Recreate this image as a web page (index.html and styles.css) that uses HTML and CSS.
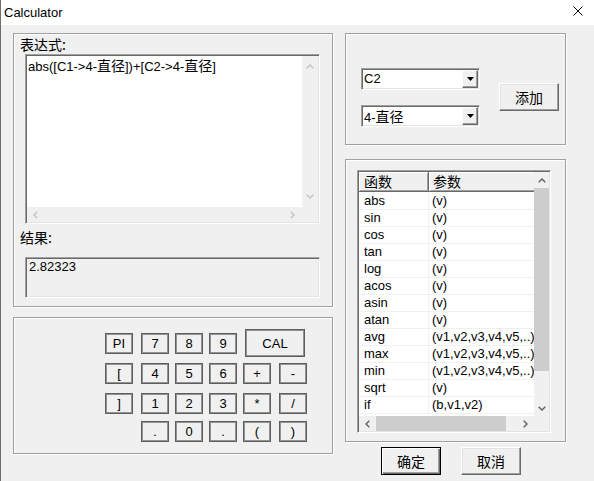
FILE: index.html
```html
<!DOCTYPE html>
<html>
<head>
<meta charset="utf-8">
<title>Calculator</title>
<link rel="stylesheet" href="styles.css">
</head>
<body>
<div class="window">
  <div class="titlebar">
    <span class="title">Calculator</span>
    <svg class="close" viewBox="0 0 10 10"><path d="M0.5 0.5 L9.5 9.5 M9.5 0.5 L0.5 9.5" stroke="#000" stroke-width="1" fill="none"/></svg>
  </div>
  <div class="content">
    <div class="col-left">
      <div class="group g-expr">
        <div class="label">表达式:</div>
        <div class="sunken expr">
          <div class="expr-text">abs([C1-&gt;4-<span class="cjk">直径</span>])+[C2-&gt;4-<span class="cjk">直径</span>]</div>
          <div class="vscroll">
            <svg class="chev-v dis" viewBox="0 0 8 5"><polyline points="0.7,4.3 4,1 7.3,4.3"/></svg>
            <svg class="chev-v dis" viewBox="0 0 8 5"><polyline points="0.7,0.7 4,4 7.3,0.7"/></svg>
          </div>
          <div class="hscroll">
            <svg class="chev-h dis" viewBox="0 0 5 8"><polyline points="4.3,0.7 1,4 4.3,7.3"/></svg>
            <svg class="chev-h dis" viewBox="0 0 5 8"><polyline points="0.7,0.7 4,4 0.7,7.3"/></svg>
          </div>
          <div class="corner"></div>
        </div>
        <div class="label result-label">结果:</div>
        <div class="sunken result">2.82323</div>
      </div>
      <div class="group g-keys">
        <div class="keypad">
          <button class="key">PI</button>
          <button class="key">7</button>
          <button class="key">8</button>
          <button class="key">9</button>
          <button class="key cal">CAL</button>
          <button class="key">[</button>
          <button class="key">4</button>
          <button class="key">5</button>
          <button class="key">6</button>
          <button class="key">+</button>
          <button class="key">-</button>
          <button class="key">]</button>
          <button class="key">1</button>
          <button class="key">2</button>
          <button class="key">3</button>
          <button class="key">*</button>
          <button class="key">/</button>
          <button class="key skip">.</button>
          <button class="key">0</button>
          <button class="key">.</button>
          <button class="key">(</button>
          <button class="key">)</button>
        </div>
      </div>
    </div>
    <div class="col-right">
      <div class="group g-pick">
        <div class="combos">
          <div class="sunken combo">
            <span class="combo-text">C2</span>
            <span class="drop"><svg viewBox="0 0 7 4"><polygon points="0,0 7,0 3.5,4"/></svg></span>
          </div>
          <div class="sunken combo">
            <span class="combo-text">4-<span class="cjk">直径</span></span>
            <span class="drop"><svg viewBox="0 0 7 4"><polygon points="0,0 7,0 3.5,4"/></svg></span>
          </div>
        </div>
        <button class="btn add">添加</button>
      </div>
      <div class="group g-list">
        <div class="sunken list">
          <div class="lv">
            <div class="lv-head">
              <div class="h1">函数</div>
              <div class="h2">参数</div>
            </div>
            <div class="lv-row"><span class="c1">abs</span><span class="c2">(v)</span></div>
            <div class="lv-row"><span class="c1">sin</span><span class="c2">(v)</span></div>
            <div class="lv-row"><span class="c1">cos</span><span class="c2">(v)</span></div>
            <div class="lv-row"><span class="c1">tan</span><span class="c2">(v)</span></div>
            <div class="lv-row"><span class="c1">log</span><span class="c2">(v)</span></div>
            <div class="lv-row"><span class="c1">acos</span><span class="c2">(v)</span></div>
            <div class="lv-row"><span class="c1">asin</span><span class="c2">(v)</span></div>
            <div class="lv-row"><span class="c1">atan</span><span class="c2">(v)</span></div>
            <div class="lv-row"><span class="c1">avg</span><span class="c2">(v1,v2,v3,v4,v5,..)</span></div>
            <div class="lv-row"><span class="c1">max</span><span class="c2">(v1,v2,v3,v4,v5,..)</span></div>
            <div class="lv-row"><span class="c1">min</span><span class="c2">(v1,v2,v3,v4,v5,..)</span></div>
            <div class="lv-row"><span class="c1">sqrt</span><span class="c2">(v)</span></div>
            <div class="lv-row"><span class="c1">if</span><span class="c2">(b,v1,v2)</span></div>
          </div>
          <div class="lv-vs">
            <div class="arrow-v"><svg class="chev-v" viewBox="0 0 8 5"><polyline points="0.7,4.3 4,1 7.3,4.3"/></svg></div>
            <div class="thumb-v"></div>
            <div class="track"></div>
            <div class="arrow-v"><svg class="chev-v" viewBox="0 0 8 5"><polyline points="0.7,0.7 4,4 7.3,0.7"/></svg></div>
          </div>
          <div class="lv-hs">
            <div class="arrow-h"><svg class="chev-h" viewBox="0 0 5 8"><polyline points="4.3,0.7 1,4 4.3,7.3"/></svg></div>
            <div class="thumb-h"></div>
            <div class="track"></div>
            <div class="arrow-h"><svg class="chev-h" viewBox="0 0 5 8"><polyline points="0.7,0.7 4,4 0.7,7.3"/></svg></div>
          </div>
          <div class="corner"></div>
        </div>
      </div>
      <div class="actions">
        <button class="btn default">确定</button>
        <button class="btn">取消</button>
      </div>
    </div>
  </div>
</div>
</body>
</html>
```

FILE: styles.css
```css
* { box-sizing: border-box; }
html, body { margin: 0; padding: 0; }
body {
  font-family: "Liberation Sans", "Noto Sans CJK SC", sans-serif;
  font-size: 13px;
  color: #000;
  background: #f0f0f0;
}
.window {
  width: 594px;
  height: 481px;
  background: #f0f0f0;
  border-left: 1px solid #6e6e6e;
  overflow: hidden;
}
.titlebar {
  height: 25px;
  background: #fff;
  display: flex;
  align-items: center;
  justify-content: space-between;
  padding: 0 11px 0 3px;
}
.title { font-size: 13px; line-height: 25px; }
.close { width: 10px; height: 10px; display: block; margin-top: -4px; }

.content { display: flex; gap: 12px; padding: 8px 0 0 12px; }
.col-left { width: 320px; display: flex; flex-direction: column; gap: 10px; }
.col-right { width: 221px; display: flex; flex-direction: column; }

.group {
  border: 1px solid #a0a0a0;
  box-shadow: inset 1px 1px 0 #fff, 1px 1px 0 #fff;
}
.cjk { font-family: "Noto Sans CJK SC", sans-serif; font-size: 14px; }

.sunken {
  border: 1px solid;
  border-color: #a0a0a0 #fff #fff #a0a0a0;
  box-shadow: inset 1px 1px 0 #696969, inset -1px -1px 0 #e3e3e3;
  padding: 1px;
}

/* expression group */
.g-expr { height: 274px; padding: 1px 12px 0 11px; }
.label {
  font-family: "Noto Sans CJK SC", sans-serif;
  font-size: 14px;
  line-height: 19px;
  height: 19px;
  margin-left: -5px;
}
.result-label { margin: 4px 0 10px -5px; }
.expr {
  height: 170px;
  background: #fff;
  display: grid;
  grid-template-columns: 1fr 16px;
  grid-template-rows: 1fr 15px;
}
.expr-text { padding: 2px 1px; line-height: 15px; white-space: nowrap; }
.expr-text .cjk { font-size: 14px; line-height: 15px; }
.vscroll {
  background: #f0f0f0;
  display: flex;
  flex-direction: column;
  justify-content: space-between;
  align-items: center;
  padding: 8px 0 8px;
}
.hscroll {
  background: #f0f0f0;
  display: flex;
  justify-content: space-between;
  align-items: center;
  padding: 0 7px 0 6px;
}
.corner { background: #f0f0f0; }
.chev-v { width: 8px; height: 5px; display: block; }
.chev-h { width: 5px; height: 8px; display: block; }
.chev-v polyline, .chev-h polyline { fill: none; stroke: #606060; stroke-width: 1.4; }
.dis polyline { stroke: #c4c4c4; }

.result {
  height: 41px;
  background: #f0f0f0;
  padding: 1px 3px;
  line-height: 15px;
}

/* keypad group */
.g-keys { height: 137px; padding: 15px 0 0 91px; }
.keypad {
  display: grid;
  grid-template-columns: 36px 34px 34px 34px 36px 28px;
  grid-template-rows: 30px 30px 28px 22px;
}
.key {
  width: 28px;
  height: 21px;
  padding: 0;
  margin: 0;
  font-family: "Liberation Sans", sans-serif;
  font-size: 13px;
  color: #000;
  background: #f0f0f0;
  border: 1px solid #5e5e5e;
  box-shadow: inset 0 0 0 1px #929292;
}
.key.cal {
  grid-column: 5 / span 2;
  width: 60px;
  height: 28px;
  margin: -4px 0 0 2px;
}
.key.skip { grid-column: 2; }

/* picker group */
.g-pick {
  height: 112px;
  display: flex;
  align-items: flex-start;
  padding: 34px 0 0 15px;
}
.combos { display: flex; flex-direction: column; gap: 15px; width: 119px; }
.combo {
  height: 22px;
  background: #fff;
  display: flex;
}
.combo-text { flex: 1; padding-left: 1px; line-height: 18px; white-space: nowrap; }
.combo-text .cjk { line-height: 18px; }
.drop {
  width: 16px;
  background: #f0f0f0;
  border: 1px solid;
  border-color: #fff #696969 #696969 #fff;
  box-shadow: inset -1px -1px 0 #a0a0a0;
  display: flex;
  align-items: center;
  justify-content: center;
}
.drop svg { width: 7px; height: 4px; display: block; }
.drop polygon { fill: #000; }

.btn {
  width: 60px;
  height: 28px;
  padding: 0;
  margin: 0;
  font-family: "Noto Sans CJK SC", sans-serif;
  font-size: 14px;
  color: #000;
  background: #f0f0f0;
  border: 1px solid;
  border-color: #fff #696969 #696969 #fff;
  box-shadow: inset -1px -1px 0 #a0a0a0, inset 1px 1px 0 #e3e3e3;
}
.btn.default {
  border: 1px solid #000;
  box-shadow: inset 1px 1px 0 #fff, inset -1px -1px 0 #696969, inset -2px -2px 0 #a0a0a0;
}
.add { margin: 15px 0 0 19px; }

/* list group */
.g-list { height: 283px; margin-top: 14px; padding: 10px 0 0 11px; }
.list {
  width: 194px;
  height: 263px;
  background: #fff;
  display: grid;
  grid-template-columns: 1fr 15px;
  grid-template-rows: 1fr 15px;
}
.lv { overflow: hidden; }
.lv-head { display: flex; height: 20px; margin-bottom: 1px; }
.lv-head div {
  font-family: "Noto Sans CJK SC", sans-serif;
  font-size: 14px;
  line-height: 18px;
  height: 20px;
  padding-left: 5px;
  background: #f0f0f0;
  border-right: 1px solid #696969;
  border-bottom: 1px solid #696969;
  box-shadow: inset 1px 1px 0 #fff, inset -1px -1px 0 #a0a0a0;
}
.lv-head .h1 { width: 70px; }
.lv-head .h2 { flex: 1; padding-left: 4px; border-right: none; box-shadow: inset 1px 1px 0 #fff, inset 0 -1px 0 #a0a0a0; }
.lv-row {
  display: flex;
  height: 17px;
  line-height: 16px;
  border-bottom: 1px solid #f0f0f0;
  white-space: nowrap;
}
.c1 { width: 70px; flex: none; padding-left: 5px; border-right: 1px solid #f0f0f0; }
.c2 { padding-left: 3px; }

.lv-vs { background: #f0f0f0; display: flex; flex-direction: column; }
.arrow-v { height: 16px; display: flex; align-items: center; justify-content: center; flex: none; }
.thumb-v { height: 183px; background: #cdcdcd; flex: none; }
.track { flex: 1; }
.lv-hs { background: #f0f0f0; display: flex; }
.arrow-h { width: 17px; display: flex; align-items: center; justify-content: center; flex: none; }
.thumb-h { width: 130px; background: #cdcdcd; flex: none; }

.actions { display: flex; gap: 20px; margin-top: 5px; padding-left: 36px; }
```
